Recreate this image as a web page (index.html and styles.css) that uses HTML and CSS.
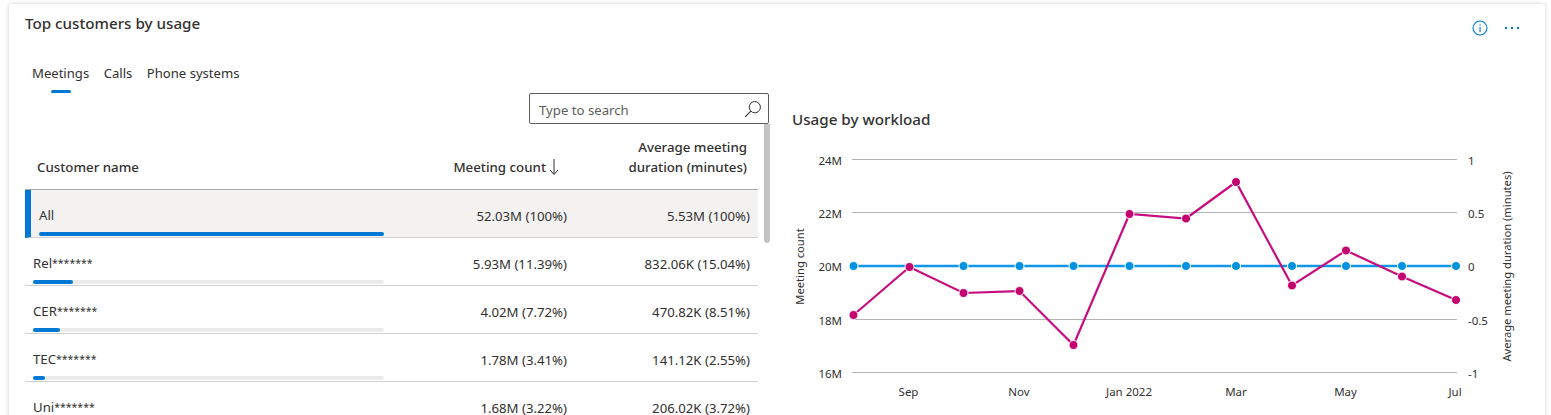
FILE: index.html
```html
<!DOCTYPE html>
<html lang="en">
<head>
<meta charset="utf-8">
<title>Top customers by usage</title>
<link rel="stylesheet" href="styles.css">
</head>
<body>
<section class="card">
  <header class="card-head">
    <h2 class="card-title">Top customers by usage</h2>
    <div class="card-actions">
      <svg class="icon-info" width="16" height="16" viewBox="0 0 16 16"><circle cx="8" cy="8" r="7" fill="none" stroke="#0078d4" stroke-width="1.1"/><rect x="7.5" y="7" width="1.1" height="5" fill="#0078d4"/><rect x="7.5" y="4.4" width="1.1" height="1.3" fill="#0078d4"/></svg>
      <svg class="icon-more" width="16" height="4" viewBox="0 0 16 4"><rect x="1" y="1" width="2" height="2" fill="#0078d4"/><rect x="7" y="1" width="2" height="2" fill="#0078d4"/><rect x="13" y="1" width="2" height="2" fill="#0078d4"/></svg>
    </div>
  </header>
  <nav class="tabs">
    <span class="tab tab-active">Meetings</span>
    <span class="tab">Calls</span>
    <span class="tab">Phone systems</span>
  </nav>
  <div class="content">
    <div class="left">
      <div class="search">
        <span class="search-text">Type to search</span>
        <svg width="18" height="18" viewBox="0 0 18 18"><circle cx="10.8" cy="7.2" r="5.6" fill="none" stroke="#323130" stroke-width="1"/><path d="M6.8 11.2 L1.2 16.8" stroke="#323130" stroke-width="1.1" fill="none"/></svg>
      </div>
      <div class="table-wrap">
        <div class="scrollbar"></div>
        <div class="thead">
          <div class="th th-name">Customer name</div>
          <div class="th th-count">Meeting count<svg width="10" height="18" viewBox="0 0 10 18"><path d="M5 1 V16 M1 12 L5 16.5 L9 12" fill="none" stroke="#323130" stroke-width="1"/></svg></div>
          <div class="th th-dur">Average meeting<br>duration (minutes)</div>
        </div>
        <div class="row row-all">
          <div class="cell-name"><span class="name">All</span><div class="track"><div class="fill" style="width:100%"></div></div></div>
          <div class="cell-count">52.03M (100%)</div>
          <div class="cell-dur">5.53M (100%)</div>
        </div>
        <div class="row">
          <div class="cell-name"><span class="name">Rel<span class="mask">*******</span></span><div class="track"><div class="fill" style="width:11.39%"></div></div></div>
          <div class="cell-count">5.93M (11.39%)</div>
          <div class="cell-dur">832.06K (15.04%)</div>
        </div>
        <div class="row">
          <div class="cell-name"><span class="name">CER<span class="mask">*******</span></span><div class="track"><div class="fill" style="width:7.72%"></div></div></div>
          <div class="cell-count">4.02M (7.72%)</div>
          <div class="cell-dur">470.82K (8.51%)</div>
        </div>
        <div class="row">
          <div class="cell-name"><span class="name">TEC<span class="mask">*******</span></span><div class="track"><div class="fill" style="width:3.41%"></div></div></div>
          <div class="cell-count">1.78M (3.41%)</div>
          <div class="cell-dur">141.12K (2.55%)</div>
        </div>
        <div class="row">
          <div class="cell-name"><span class="name">Uni<span class="mask">*******</span></span><div class="track"><div class="fill" style="width:3.22%"></div></div></div>
          <div class="cell-count">1.68M (3.22%)</div>
          <div class="cell-dur">206.02K (3.72%)</div>
        </div>
      </div>
    </div>
    <div class="right">
      <h3 class="chart-title">Usage by workload</h3>
      <svg class="chart" width="740" height="270" viewBox="790 140 740 270">
        <g class="grid">
          <line x1="852" x2="1457" y1="159.5" y2="159.5"/>
          <line x1="852" x2="1457" y1="212.5" y2="212.5"/>
          <line x1="852" x2="1457" y1="319.5" y2="319.5"/>
          <line x1="852" x2="1457" y1="372.5" y2="372.5"/>
        </g>
        <g class="axis-left">
          <text x="842" y="165">24M</text>
          <text x="842" y="218">22M</text>
          <text x="842" y="271">20M</text>
          <text x="842" y="325">18M</text>
          <text x="842" y="378">16M</text>
        </g>
        <g class="axis-right">
          <text x="1468" y="165">1</text>
          <text x="1468" y="218">0.5</text>
          <text x="1468" y="271">0</text>
          <text x="1468" y="325">-0.5</text>
          <text x="1468" y="378">-1</text>
        </g>
        <g class="axis-bottom">
          <text x="908.5" y="396">Sep</text>
          <text x="1019" y="396">Nov</text>
          <text x="1129" y="396">Jan 2022</text>
          <text x="1236" y="396">Mar</text>
          <text x="1345.5" y="396">May</text>
          <text x="1455" y="396">Jul</text>
        </g>
        <text class="axis-title" transform="translate(804 266.5) rotate(-90)">Meeting count</text>
        <text class="axis-title" transform="translate(1511 266.5) rotate(-90)">Average meeting duration (minutes)</text>
        <polyline class="line-blue" points="853.5,266 909.5,266 963.5,266 1019.5,266 1073.5,266 1129.5,266 1186,266 1236,266 1292,266 1346,266 1402,266 1456,266"/>
        <polyline class="line-pink" points="853.5,315 909.5,267 963.5,293 1019.5,291 1073.5,345 1129.5,214 1186,218.5 1236,182 1292,285.5 1346,250.5 1402,276.5 1456,300"/>
        <g class="dots-blue">
          <circle cx="853.5" cy="266" r="4.5"/><circle cx="963.5" cy="266" r="4.5"/><circle cx="1019.5" cy="266" r="4.5"/><circle cx="1073.5" cy="266" r="4.5"/><circle cx="1129.5" cy="266" r="4.5"/><circle cx="1186" cy="266" r="4.5"/><circle cx="1236" cy="266" r="4.5"/><circle cx="1292" cy="266" r="4.5"/><circle cx="1346" cy="266" r="4.5"/><circle cx="1402" cy="266" r="4.5"/><circle cx="1456" cy="266" r="4.5"/>
        </g>
        <g class="dots-pink">
          <circle cx="853.5" cy="315" r="4.5"/><circle cx="909.5" cy="267" r="4.5"/><circle cx="963.5" cy="293" r="4.5"/><circle cx="1019.5" cy="291" r="4.5"/><circle cx="1073.5" cy="345" r="4.5"/><circle cx="1129.5" cy="214" r="4.5"/><circle cx="1186" cy="218.5" r="4.5"/><circle cx="1236" cy="182" r="4.5"/><circle cx="1292" cy="285.5" r="4.5"/><circle cx="1346" cy="250.5" r="4.5"/><circle cx="1402" cy="276.5" r="4.5"/><circle cx="1456" cy="300" r="4.5"/>
        </g>
      </svg>
    </div>
  </div>
</section>
</body>
</html>
```

FILE: styles.css
```css
* { box-sizing: border-box; }
html, body { margin: 0; height: 415px; overflow: hidden; background: #fff; }
body { font-family: "Noto Sans", "Open Sans", "Liberation Sans", sans-serif; color: #323130; font-size: 13px; padding: 4px 6px 0 9px; }

.card { background: #fff; border-radius: 2px; box-shadow: 0 0 4px rgba(0,0,0,.2); height: 600px; padding: 0 0 0 16px; }
.card-head { display: flex; justify-content: space-between; height: 40px; padding: 9px 25px 0 0; }
.card-title { margin: 0; font-size: 15.2px; line-height: 20px; font-weight: 500; }
.card-actions { display: flex; align-items: center; gap: 16px; height: 30px; }
.tabs { display: flex; gap: 14.5px; padding: 19px 0 0 7px; height: 49px; }
.tab { position: relative; font-size: 13.1px; line-height: 20px; height: 20px; }
.tab-active::after { content: ""; position: absolute; left: 19px; width: 20px; top: 27px; height: 3px; border-radius: 2px; background: #0078d4; }

.content { display: flex; }
.left { width: 745px; flex: none; }
.search { margin-left: 504px; width: 240px; height: 31px; border: 1px solid #605e5c; border-radius: 2px; display: flex; align-items: center; justify-content: space-between; padding: 0 6px 0 9px; background: #fff; }
.search-text { color: #605e5c; font-size: 13.2px; padding-top: 2px; }
.table-wrap { position: relative; width: 745px; }
.scrollbar { position: absolute; left: 739px; top: 0; width: 6px; height: 119px; background: #c4c4c4; border-radius: 0 0 3px 3px; }

.thead { display: flex; align-items: center; width: 733px; height: 66px; border-bottom: 1px solid #a8a8a8; font-size: 13.3px; font-weight: 500; line-height: 20px; }
.th-name { width: 383px; padding: 20px 0 0 12px; }
.th-count { width: 151px; display: flex; justify-content: flex-end; align-items: center; gap: 3px; padding: 20px 0 0 0; }
.th-dur { flex: 1; text-align: right; padding: 0 11px 0 0; }

.row { display: flex; width: 733px; height: 48px; border-bottom: 1px solid #d0d0d0; font-size: 13.2px; }
.row-all { background: #f3f2f1; border-left: 6px solid #0078d4; }
.cell-name { width: 359px; padding: 0 0 0 8px; display: flex; flex-direction: column; }
.row-all .cell-name { width: 353px; }
.name { display: block; height: 42px; line-height: 20px; padding-top: 15px; }
.mask { font-size: 10.5px; position: relative; top: -1px; }
.track { height: 4px; background: #ebebeb; border-radius: 2px; }
.fill { height: 4px; background: #0078d4; border-radius: 2px; }
.cell-count { width: 183px; text-align: right; line-height: 20px; padding-top: 16px; }
.cell-dur { flex: 1; text-align: right; line-height: 20px; padding: 16px 8px 0 0; }

.right { flex: 1; padding: 16px 0 0 22px; }
.chart-title { margin: 0; font-size: 15.2px; line-height: 20px; font-weight: 500; height: 31px; }
.chart { display: block; margin-left: -2px; }
.chart text { font-family: "Noto Sans", "Open Sans", sans-serif; font-size: 11.5px; fill: #323130; }
.grid line { stroke: #b3b3b3; stroke-width: 1; }
.axis-left text { text-anchor: end; }
.axis-bottom text { text-anchor: middle; }
.chart .axis-title { font-size: 11.2px; text-anchor: middle; }
.line-blue { fill: none; stroke: #0f97e6; stroke-width: 2.6; }
.line-pink { fill: none; stroke: #c60d7f; stroke-width: 2.2; }
.dots-blue circle { fill: #0092e0; stroke: #fff; stroke-width: 1; }
.dots-pink circle { fill: #c4006f; stroke: #fff; stroke-width: 1; }
```
